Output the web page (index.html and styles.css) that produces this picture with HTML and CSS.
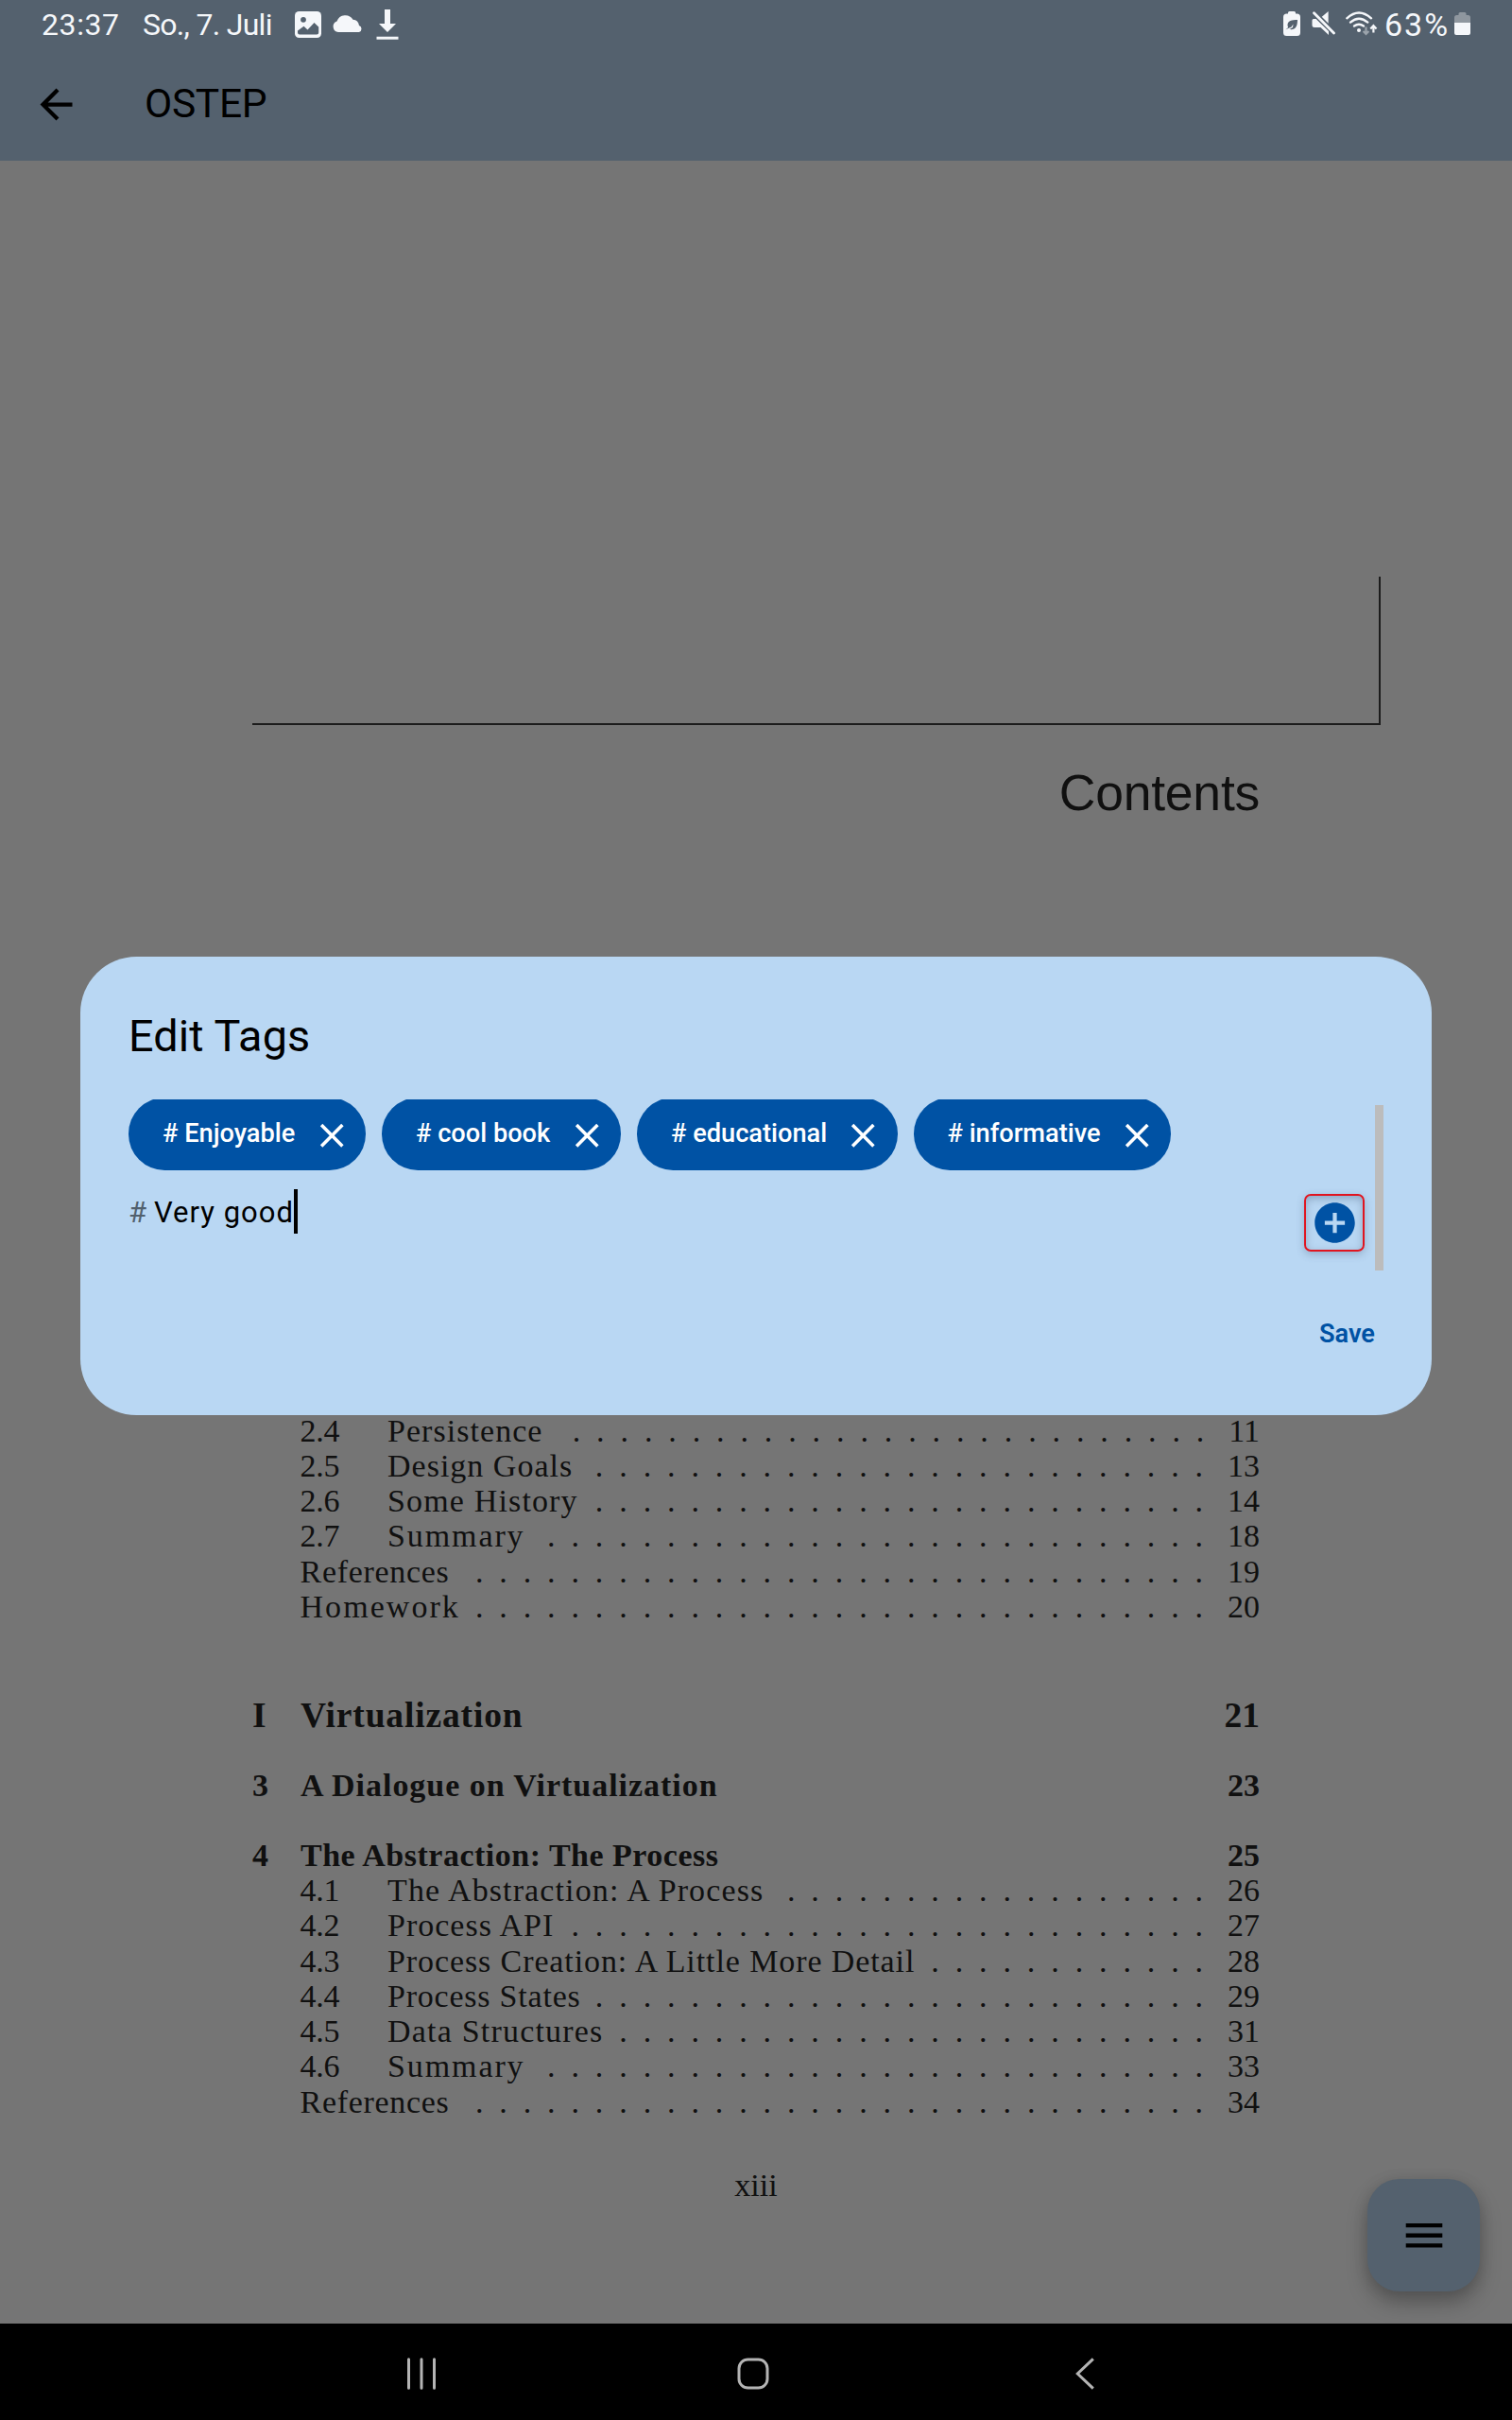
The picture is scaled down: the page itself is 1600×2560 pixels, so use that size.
FILE: index.html
```html
<!DOCTYPE html>
<html lang="de">
<head>
<meta charset="utf-8">
<title>OSTEP</title>
<link rel="stylesheet" href="styles.css">
</head>
<body>
<div class="screen">
  <div class="status">
    <span class="clock">23:37</span>
    <span class="date">So., 7. Juli</span>
    <svg class="ic-image" width="28" height="28" viewBox="0 0 28 28"><rect width="28" height="28" rx="4.5" fill="#f5f7fa"/><circle cx="9" cy="8.8" r="2.9" fill="#54616e"/><path d="M3 22.500V20.500L9.500 15.800 13.500 19.500 20.500 12 25.200 16.500V22.500Q25.200 24.500 23.200 24.500H5Q3 24.500 3 22.500Z" fill="#54616e"/></svg>
    <svg class="ic-cloud" width="32" height="19" viewBox="0 0 32 19"><path d="M6 19A6 6 0 0 1 4.500 7.400 9.500 9.500 0 0 1 21.500 5.800 7.200 7.200 0 0 1 28 12 3.700 3.700 0 0 1 28 19Z" fill="#f5f7fa"/></svg>
    <svg class="ic-down" width="24" height="32" viewBox="0 0 24 32"><path d="M9 0h6v15h6L12 24 3 15h6ZM.5 28.800h23V31.800H.5Z" fill="#f5f7fa"/></svg>
    <span class="spacer"></span>
    <svg class="ic-saver" width="18" height="26" viewBox="0 0 18 26"><path d="M5 2.500V1.500Q5 0 6.500 0h5Q13 0 13 1.500V2.500H14.500Q18 2.500 18 6V22.500Q18 26 14.500 26H3.500Q0 26 0 22.500V6Q0 2.500 3.500 2.500Z" fill="#f5f7fa"/><path d="M15 9C9 9 4.500 10 4.500 14.500 4.500 15.500 4.800 16.300 5.200 17L2.500 19.300 8.500 16.500 10.500 13.500 10 17 6.500 19C12.500 20 15 16.500 15 9Z" fill="#54616e"/></svg>
    <svg class="ic-mute" width="25" height="25" viewBox="0 0 25 25"><path d="M10.500 6 17.600 0V13Z" fill="#f5f7fa"/><path d="M2.500 1.800 23.500 23" stroke="#54616e" stroke-width="6"/><path d="M2 8H4.600L18 21V25L9.500 17H3Q.5 17 .5 14.500V9.500Q.5 8 2 8Z" fill="#f5f7fa"/><path d="M2.500 1.800 23.500 23" stroke="#f5f7fa" stroke-width="2.800" stroke-linecap="round"/></svg>
    <svg class="ic-wifi" width="34" height="26" viewBox="0 0 34 26"><g fill="none" stroke="#f5f7fa" stroke-width="2.400" stroke-linecap="round"><path d="M1.300 7.300Q14 -4.500 27 7.300"/><path d="M5 11.600Q14 3.800 23.300 11.600"/><path d="M9 15.500Q14 11.800 19 15.500"/></g><circle cx="14" cy="20" r="2" fill="#f5f7fa"/><path d="M21.500 16.500V24M18.600 21l2.900 3 2.900-3" fill="none" stroke="#9ba3ab" stroke-width="2.200"/><path d="M29.400 22.500V15.200M26.300 18.500l3.100-3.300 3.100 3.300" fill="none" stroke="#f5f7fa" stroke-width="2.200"/></svg>
    <span class="level">63%</span>
    <svg class="ic-batt" width="17" height="24" viewBox="0 0 17 24"><path d="M0 11V5.500Q0 3 2.500 3H4.500V1.500Q4.500 0 6 0h5q1.500 0 1.500 1.500V3H14.500Q17 3 17 5.500V11Z" fill="#8f979f"/><path d="M0 11H17V22Q17 24 15 24H2Q0 24 0 22Z" fill="#f5f7fa"/></svg>
  </div>

  <header class="appbar">
    <svg width="51" height="51" viewBox="0 0 24 24"><path d="M20 11H7.830l5.590-5.590L12 4l-8 8 8 8 1.410-1.410L7.830 13H20v-2z"/></svg>
    <h1>OSTEP</h1>
  </header>

  <main class="page">
    <div class="rule"></div>
    <h2 class="contents">Contents</h2>
    <div class="toc">
      <div class="row sub"><span class="no">2.4</span><span class="name" style="--track:1.05px">Persistence</span><span class="dots">...........................</span><span>11</span></div>
      <div class="row sub"><span class="no">2.5</span><span class="name" style="--track:1px">Design Goals</span><span class="dots">..........................</span><span>13</span></div>
      <div class="row sub"><span class="no">2.6</span><span class="name" style="--track:1.15px">Some History</span><span class="dots">..........................</span><span>14</span></div>
      <div class="row sub"><span class="no">2.7</span><span class="name" style="--track:1.9px">Summary</span><span class="dots">............................</span><span>18</span></div>
      <div class="row sub"><span class="name" style="--track:.7px">References</span><span class="dots">...............................</span><span>19</span></div>
      <div class="row sub"><span class="name" style="--track:2.05px">Homework</span><span class="dots">...............................</span><span>20</span></div>
      <div class="row part"><span class="ord">I</span><span class="name" style="--track:.85px">Virtualization</span><span class="end">21</span></div>
      <div class="row chapter first"><span class="ord">3</span><span class="name" style="--track:.96px">A Dialogue on Virtualization</span><span class="end">23</span></div>
      <div class="row chapter"><span class="ord">4</span><span class="name" style="--track:.5px">The Abstraction: The Process</span><span class="end">25</span></div>
      <div class="row sub"><span class="no">4.1</span><span class="name" style="--track:1.12px">The Abstraction: A Process</span><span class="dots">..................</span><span>26</span></div>
      <div class="row sub"><span class="no">4.2</span><span class="name" style="--track:1px">Process API</span><span class="dots">...........................</span><span>27</span></div>
      <div class="row sub"><span class="no">4.3</span><span class="name" style="--track:.9px">Process Creation: A Little More Detail</span><span class="dots">............</span><span>28</span></div>
      <div class="row sub"><span class="no">4.4</span><span class="name" style="--track:.78px">Process States</span><span class="dots">..........................</span><span>29</span></div>
      <div class="row sub"><span class="no">4.5</span><span class="name" style="--track:1.2px">Data Structures</span><span class="dots">.........................</span><span>31</span></div>
      <div class="row sub"><span class="no">4.6</span><span class="name" style="--track:1.9px">Summary</span><span class="dots">............................</span><span>33</span></div>
      <div class="row sub"><span class="name" style="--track:.7px">References</span><span class="dots">...............................</span><span>34</span></div>
    </div>
    <div class="folio">xiii</div>
  </main>

  <nav class="nav">
    <svg width="34" height="36" viewBox="0 0 34 36"><path d="M3.500 2.800V33.200M17 2.800V33.200M30.500 2.800V33.200" stroke="#b4b4b4" stroke-width="3" stroke-linecap="round"/></svg>
    <svg width="36" height="36" viewBox="0 0 36 36"><rect x="3" y="3" width="30" height="30" rx="9.500" fill="none" stroke="#b4b4b4" stroke-width="3"/></svg>
    <svg width="22" height="36" viewBox="0 0 22 36"><path d="M19.800 2.300 3.300 18 19.800 33.700" fill="none" stroke="#b4b4b4" stroke-width="3"/></svg>
  </nav>

  <button class="fab" aria-label="Menu"><svg width="40" height="26" viewBox="0 0 40 26"><path d="M.7 0h38.600v4.300H.7zM.7 10.600h38.600v4.300H.7zM.7 21.200h38.600v4.300H.7z"/></svg></button>

  <section class="dialog">
    <h2>Edit Tags</h2>
    <div class="scroller">
      <div class="entry">
        <div class="chips">
          <span class="chip c1"><b># Enjoyable</b><svg viewBox="0 0 24 24"><path d="M19 6.410 17.590 5 12 10.590 6.410 5 5 6.410 10.590 12 5 17.590 6.410 19 12 13.410 17.590 19 19 17.590 13.410 12z"/></svg></span>
          <span class="chip c2"><b># cool book</b><svg viewBox="0 0 24 24"><path d="M19 6.410 17.590 5 12 10.590 6.410 5 5 6.410 10.590 12 5 17.590 6.410 19 12 13.410 17.590 19 19 17.590 13.410 12z"/></svg></span>
          <span class="chip c3"><b># educational</b><svg viewBox="0 0 24 24"><path d="M19 6.410 17.590 5 12 10.590 6.410 5 5 6.410 10.590 12 5 17.590 6.410 19 12 13.410 17.590 19 19 17.590 13.410 12z"/></svg></span>
          <span class="chip c4"><b># informative</b><svg viewBox="0 0 24 24"><path d="M19 6.410 17.590 5 12 10.590 6.410 5 5 6.410 10.590 12 5 17.590 6.410 19 12 13.410 17.590 19 19 17.590 13.410 12z"/></svg></span>
        </div>
        <div class="field">
          <span class="hash">#</span><span class="value">Very good</span><i class="caret"></i>
          <span class="add"><svg width="51" height="51" viewBox="0 0 24 24"><path d="M12 2C6.480 2 2 6.480 2 12s4.480 10 10 10 10-4.480 10-10S17.520 2 12 2zm5 11h-4v4h-2v-4H7v-2h4V7h2v4h4v2z"/></svg></span>
        </div>
      </div>
      <div class="thumb"></div>
    </div>
    <div class="actions"><span class="save">Save</span></div>
  </section>
</div>
</body>
</html>
```
FILE: styles.css
```css
* { box-sizing: border-box; }
body { margin: 0; background: #757575; }
h1, h2 { margin: 0; font-weight: 400; }
svg { display: block; flex: none; }

.screen {
  position: relative;
  display: grid;
  grid-template-rows: 51px 119px 2288px 102px;
  width: 1600px;
  height: 2560px;
  overflow: hidden;
  font-family: Roboto, sans-serif;
}

/* system status bar */
.status {
  display: flex;
  align-items: flex-start;
  padding: 0 44px 0 44px;
  background: #54616e;
  color: #f5f7fa;
  font-size: 32px;
  line-height: 52px;
  white-space: nowrap;
}
.clock { width: 107px; letter-spacing: .6px; }
.date { width: 161px; letter-spacing: -.7px; }
.ic-image { margin-top: 12px; }
.ic-cloud { margin: 15px 0 0 12px; }
.ic-down { margin: 10px 0 0 14px; }
.spacer { flex: 1; }
.ic-saver { margin-top: 12px; }
.ic-mute { margin: 12px 0 0 12px; }
.ic-wifi { margin: 12px 0 0 11px; }
.level { width: 74px; margin-left: 7px; font-size: 34px; letter-spacing: 2px; }
.ic-batt { margin-top: 13px; }

.appbar {
  display: flex;
  align-items: center;
  gap: 68px;
  padding: 0 34px 1px;
  background: #54616e;
}
.appbar h1 { font-size: 42.500px; line-height: 50px; letter-spacing: -.3px; }

/* scanned book page */
.page {
  padding: 440px 267px 0;
  background: #757575;
  color: #101010;
  font-family: "Liberation Serif", serif;
  font-size: 34px;
  line-height: 37.300px;
}
.rule {
  height: 157px;
  margin-right: -128px;
  border: solid #1c1c1c;
  border-width: 0 2px 2px 0;
}
.contents {
  margin-top: 42px;
  font-family: "Liberation Sans", sans-serif;
  font-size: 53.500px;
  line-height: 60px;
  text-align: right;
  letter-spacing: -.25px;
}
.toc { margin-top: 625.500px; }
.row { display: flex; height: 37.330px; white-space: nowrap; }
.sub { padding-left: 50.500px; }
.no { width: 92.500px; letter-spacing: -.2px; }
.name { letter-spacing: var(--track); }
.dots {
  flex: 1;
  margin-right: 9px;
  text-align: right;
  letter-spacing: 16.890px;
}
.part, .chapter { font-weight: 700; }
.part { margin-top: 77.500px; font-size: 37.500px; }
.chapter { margin-top: 35.900px; }
.chapter.first { margin-top: 37px; }
.ord { width: 51px; }
.end { margin-left: auto; }
.folio { margin-top: 51px; text-align: center; }

/* system navigation */
.nav {
  display: flex;
  align-items: center;
  padding: 3px 0 0 429px;
  background: #000;
}
.nav svg + svg { margin-left: 316px; }
.nav svg + svg + svg { margin-left: 322px; }

/* overlays */
.fab {
  position: absolute;
  left: 1447px;
  top: 2305px;
  display: grid;
  place-items: center;
  width: 119px;
  height: 119px;
  padding: 0;
  border: 0;
  border-radius: 34px;
  background: #54616e;
  box-shadow: 0 12px 22px rgba(0, 0, 0, .26), 0 2px 16px rgba(0, 0, 0, .1);
  clip-path: inset(-60px -34px -34px -60px);
}
.dialog {
  position: absolute;
  left: 85px;
  top: 1012px;
  width: 1430px;
  height: 485px;
  padding: 51px 51px 0;
  border-radius: 59.500px;
  background: #b9d7f3;
  color: #000;
}
.dialog h2 { height: 100px; font-size: 46.750px; line-height: 66px; letter-spacing: .15px; }
.scroller {
  display: flex;
  justify-content: space-between;
  height: 187px;
  overflow: hidden;
}
.entry { width: 1308px; }
.chips { display: flex; gap: 17px; margin-top: -2px; }
.chip {
  display: flex;
  align-items: center;
  justify-content: space-between;
  height: 76.500px;
  padding: 0 15px 0 36px;
  border-radius: 38.250px;
  background: #0052a4;
  color: #fff;
}
.chip b { font-size: 27.200px; font-weight: 500; line-height: 36px; }
.chip svg { width: 42.500px; height: 42.500px; margin-top: 4px; fill: #fff; }
.c1 { width: 251px; }
.c2 { width: 253px; }
.c3 { width: 275.500px; }
.c4 { width: 272.500px; }
.field { display: flex; padding-top: 20px; font-size: 31px; line-height: 50px; }
.hash { width: 27px; color: #51606d; }
.value { letter-spacing: 1px; }
.caret { width: 4px; height: 47px; background: #000; }
.add {
  display: grid;
  place-items: center;
  width: 64px;
  height: 61px;
  margin: 5px 0 0 auto;
  border: 2px solid #e01520;
  border-radius: 7px;
  box-shadow: 0 3px 8px rgba(60, 80, 110, .3), inset 0 3px 8px rgba(60, 80, 110, .35);
}
.add svg { fill: #0052a4; }
.thumb { width: 9px; height: 175px; margin: 6px 0 0; background: #bcbcbc; }
.actions { display: flex; justify-content: flex-end; padding: 41px 9px 0 0; }
.save { color: #0052a4; font-size: 27.200px; font-weight: 600; line-height: 40px; }
```
